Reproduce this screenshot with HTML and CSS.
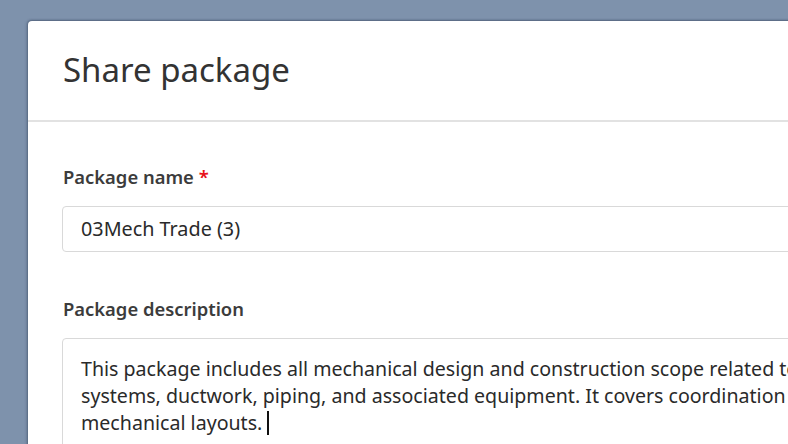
FILE: index.html
```html
<!DOCTYPE html>
<html lang="en">
<head>
<meta charset="utf-8">
<title>Share package</title>
<link rel="stylesheet" href="styles.css">
</head>
<body>
<div class="dialog">
  <div class="dialog-header">
    <h1 class="dialog-title">Share package</h1>
  </div>
  <div class="dialog-body">
    <div class="field">
      <label class="field-label">Package name <span class="required">*</span></label>
      <div class="input">03Mech Trade (3)</div>
    </div>
    <div class="field field-desc">
      <label class="field-label">Package description</label>
      <div class="textarea">
        <div class="line">This package includes all mechanical design and construction scope related to HVAC</div>
        <div class="line">systems, ductwork, piping, and associated equipment. It covers coordination of all</div>
        <div class="line">mechanical layouts.<span class="caret"></span></div>
      </div>
    </div>
  </div>
</div>
</body>
</html>
```

FILE: styles.css
```css
html, body {
  margin: 0;
  padding: 0;
  height: 100%;
  overflow: hidden;
}
body {
  background: #7e92ac;
  font-family: "Noto Sans", "Open Sans", sans-serif;
  color: #3c3c3c;
  padding: 21px 0 0 28px;
  box-sizing: border-box;
}
.dialog {
  width: 900px;
  height: 600px;
  background: #ffffff;
  border-radius: 4px 0 0 0;
  box-shadow: -1px 0 3px rgba(40, 55, 80, 0.45), 0 -1px 2px rgba(40, 55, 80, 0.35);
}
.dialog-header {
  padding: 29px 35px 30px;
  border-bottom: 2px solid #e2e2e2;
}
.dialog-title {
  margin: 0;
  font-size: 33px;
  line-height: 40px;
  font-weight: 400;
  color: #333333;
}
.dialog-body {
  padding: 43px 35px 0 34px;
}
.field {
  display: flex;
  flex-direction: column;
}
.field-desc {
  margin-top: 45px;
}
.field-label {
  font-size: 18.4px;
  line-height: 24px;
  font-weight: 600;
  color: #3c3c3c;
  padding-left: 1px;
  margin-bottom: 17px;
}
.required {
  color: #e8121a;
}
.input {
  height: 44px;
  border: 1px solid #d9d9d9;
  border-radius: 4px;
  padding-left: 18px;
  font-size: 19.8px;
  line-height: 44px;
  color: #2a2a2a;
}
.textarea {
  border: 1px solid #d9d9d9;
  border-radius: 4px;
  padding: 16px 18px;
  font-size: 19.6px;
  line-height: 27px;
  color: #2a2a2a;
  height: 200px;
}
.line {
  white-space: nowrap;
}
.caret {
  display: inline-block;
  width: 2px;
  height: 24px;
  background: #111111;
  vertical-align: -5px;
  margin-left: 5px;
}
```
